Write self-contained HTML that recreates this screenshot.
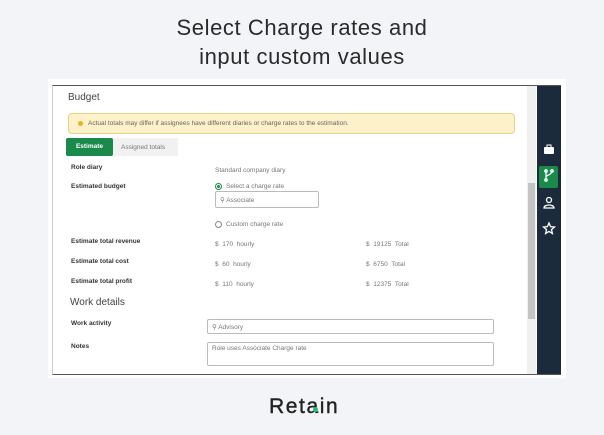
<!DOCTYPE html>
<html><head><style>
*{margin:0;padding:0;box-sizing:border-box}
body{width:604px;height:435px;background:#f3f4f8;font-family:"Liberation Sans",sans-serif;position:relative;overflow:hidden;color:#333}
.a{position:absolute}
.t{font-size:22px;color:#2a2a2a;width:604px;text-align:center;letter-spacing:0.6px}
.s{font-size:7px;color:#666}
.l{font-size:6.5px;font-weight:bold;color:#333;left:71px}
.v{font-size:6.5px;color:#777}
.in{border:1px solid #bbb;border-radius:2px;background:#fff}
.rad{width:7px;height:7px;border:1px solid #888;border-radius:50%}
</style></head><body>
<div class="a t" style="top:15px">Select Charge rates and</div>
<div class="a t" style="top:44px">input custom values</div>
<div class="a" style="left:48px;top:79px;width:518px;height:299px;background:#fff"></div>
<div class="a" style="left:52px;top:85px;width:509px;height:290px;border-top:1px solid #555;border-left:1px solid #ccc;border-bottom:1px solid #555;background:#fff"></div>
<div class="a" style="left:68px;top:92px;font-size:10px;color:#444">Budget</div>
<div class="a" style="left:68px;top:113px;width:447px;height:21px;background:#fdf1c9;border:1px solid #e6d38a;border-radius:4px"></div>
<div class="a" style="left:78px;top:121px;width:5px;height:5px;border-radius:50%;background:#e6b422"></div>
<div class="a s" style="left:88px;top:120px;font-size:6.5px">Actual totals may differ if assignees have different diaries or charge rates to the estimation.</div>
<div class="a" style="left:66px;top:138px;width:112px;height:18px;background:#f1f1f1"></div>
<div class="a" style="left:66px;top:138px;width:47px;height:18px;background:#1a8a4a;border-radius:2px;color:#fff;font-size:6.5px;font-weight:bold;line-height:18px;text-align:center">Estimate</div>
<div class="a v" style="left:121px;top:144px">Assigned totals</div>
<div class="a l" style="top:164px">Role diary</div>
<div class="a l" style="top:183px">Estimated budget</div>
<div class="a l" style="top:238px">Estimate total revenue</div>
<div class="a l" style="top:258px">Estimate total cost</div>
<div class="a l" style="top:278px">Estimate total profit</div>
<div class="a" style="left:70px;top:297px;font-size:10px;color:#444">Work details</div>
<div class="a l" style="top:320px">Work activity</div>
<div class="a l" style="top:343px">Notes</div>
<div class="a v" style="left:215px;top:167px">Standard company diary</div>
<div class="a rad" style="left:215px;top:183px;border-color:#1a8a4a"></div>
<div class="a" style="left:217px;top:185px;width:3px;height:3px;border-radius:50%;background:#1a8a4a"></div>
<div class="a v" style="left:226px;top:183px">Select a charge rate</div>
<div class="a in" style="left:215px;top:191px;width:104px;height:17px"></div>
<div class="a v" style="left:220px;top:196px">&#9906; Associate</div>
<div class="a rad" style="left:215px;top:221px"></div>
<div class="a v" style="left:226px;top:221px">Custom charge rate</div>
<div class="a v" style="left:215px;top:241px">$ &nbsp;170 &nbsp;hourly</div>
<div class="a v" style="left:215px;top:261px">$ &nbsp;60 &nbsp;hourly</div>
<div class="a v" style="left:215px;top:281px">$ &nbsp;110 &nbsp;hourly</div>
<div class="a v" style="left:366px;top:241px">$ &nbsp;19125 &nbsp;Total</div>
<div class="a v" style="left:366px;top:261px">$ &nbsp;6750 &nbsp;Total</div>
<div class="a v" style="left:366px;top:281px">$ &nbsp;12375 &nbsp;Total</div>
<div class="a in" style="left:207px;top:319px;width:287px;height:15px"></div>
<div class="a v" style="left:212px;top:323px">&#9906; Advisory</div>
<div class="a in" style="left:207px;top:342px;width:287px;height:24px"></div>
<div class="a v" style="left:212px;top:345px">Role uses Associate Charge rate</div>
<div class="a" style="left:527px;top:86px;width:9px;height:288px;background:#f0f0f0"></div>
<div class="a" style="left:528px;top:183px;width:7px;height:136px;background:#c4c4c4"></div>
<div class="a" style="left:537px;top:86px;width:24px;height:288px;background:#1c2b3b"></div>
<div class="a" style="left:539px;top:166px;width:19px;height:22px;background:#1a8a4a;border-radius:2px"></div>
<svg class="a" style="left:537px;top:140px" width="24" height="105" viewBox="0 0 24 105">
<rect x="7" y="7" width="10" height="7" fill="#fff" rx="1"/><rect x="10" y="5" width="4" height="3" fill="none" stroke="#fff"/>
<g fill="none" stroke="#fff" stroke-width="1.3"><path d="M9 31v8M15 31c0 4-6 4-6 6"/><circle cx="9" cy="31" r="1.2"/><circle cx="15" cy="31" r="1.2"/><circle cx="9" cy="40" r="1.2"/>
<circle cx="12" cy="60" r="2.5"/><path d="M7 68c0-4 10-4 10 0z"/>
<path d="M12 83l1.6 3.6 3.9.4-3 2.6.9 3.9L12 91.4 8.6 93.5l.9-3.9-3-2.6 3.9-.4z"/></g></svg>
<div class="a" style="left:269px;top:395px;font-size:21px;color:#222;letter-spacing:1.6px;-webkit-text-stroke:0.4px #222">Retain</div>
<div class="a" style="left:313px;top:407px;width:5px;height:5px;border-radius:50%;background:#1fbf6a"></div>
</body></html>
